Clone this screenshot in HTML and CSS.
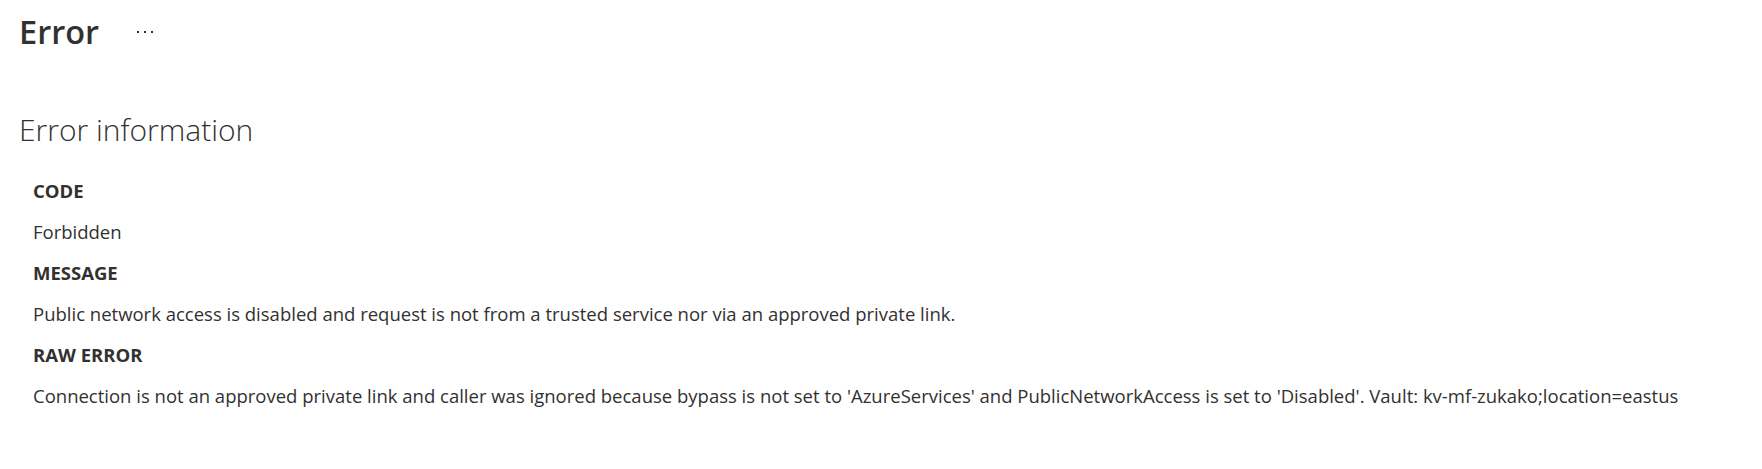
FILE: index.html
```html
<!DOCTYPE html>
<html lang="en">
<head>
<meta charset="utf-8">
<title>Error</title>
<link rel="stylesheet" href="styles.css">
</head>
<body>
<main class="page">
  <header class="title-bar">
    <h1 class="title">Error</h1>
    <button class="more" aria-label="More">
      <svg width="16" height="4" viewBox="0 0 16 4"><rect x="0" y="1" width="2" height="2"/><rect x="7" y="1" width="2" height="2"/><rect x="14" y="1" width="2" height="2"/></svg>
    </button>
  </header>
  <h2 class="section">Error information</h2>
  <dl class="info">
    <dt>CODE</dt>
    <dd>Forbidden</dd>
    <dt>MESSAGE</dt>
    <dd>Public network access is disabled and request is not from a trusted service nor via an approved private link.</dd>
    <dt>RAW ERROR</dt>
    <dd>Connection is not an approved private link and caller was ignored because bypass is not set to 'AzureServices' and PublicNetworkAccess is set to 'Disabled'. Vault: kv-mf-zukako;location=eastus</dd>
  </dl>
</main>
</body>
</html>
```

FILE: styles.css
```css
html, body {
  margin: 0;
  padding: 0;
  background: #ffffff;
}

body {
  font-family: "Open Sans", "Noto Sans", sans-serif;
  color: #323130;
}

.page {
  display: flex;
  flex-direction: column;
  padding: 8px 0 0 19px;
}

.title-bar {
  display: flex;
  align-items: flex-start;
  gap: 38px;
  height: 47px;
}

.title {
  margin: 0;
  font-size: 32.5px;
  font-weight: 600;
  line-height: 48px;
}

.more {
  border: 0;
  background: none;
  padding: 0;
  display: flex;
  margin-top: 22px;
}

.more svg {
  display: block;
  fill: #323130;
}

.section {
  margin: 56px 0 0 0;
  font-size: 30px;
  font-weight: 300;
  line-height: 38px;
}

.info {
  margin: 30px 0 0 14px;
}

.info dt,
.info dd {
  margin: 0 0 17.1px 0;
  font-size: 18.5px;
  line-height: 24px;
}

.info dt {
  font-weight: 700;
}
```
